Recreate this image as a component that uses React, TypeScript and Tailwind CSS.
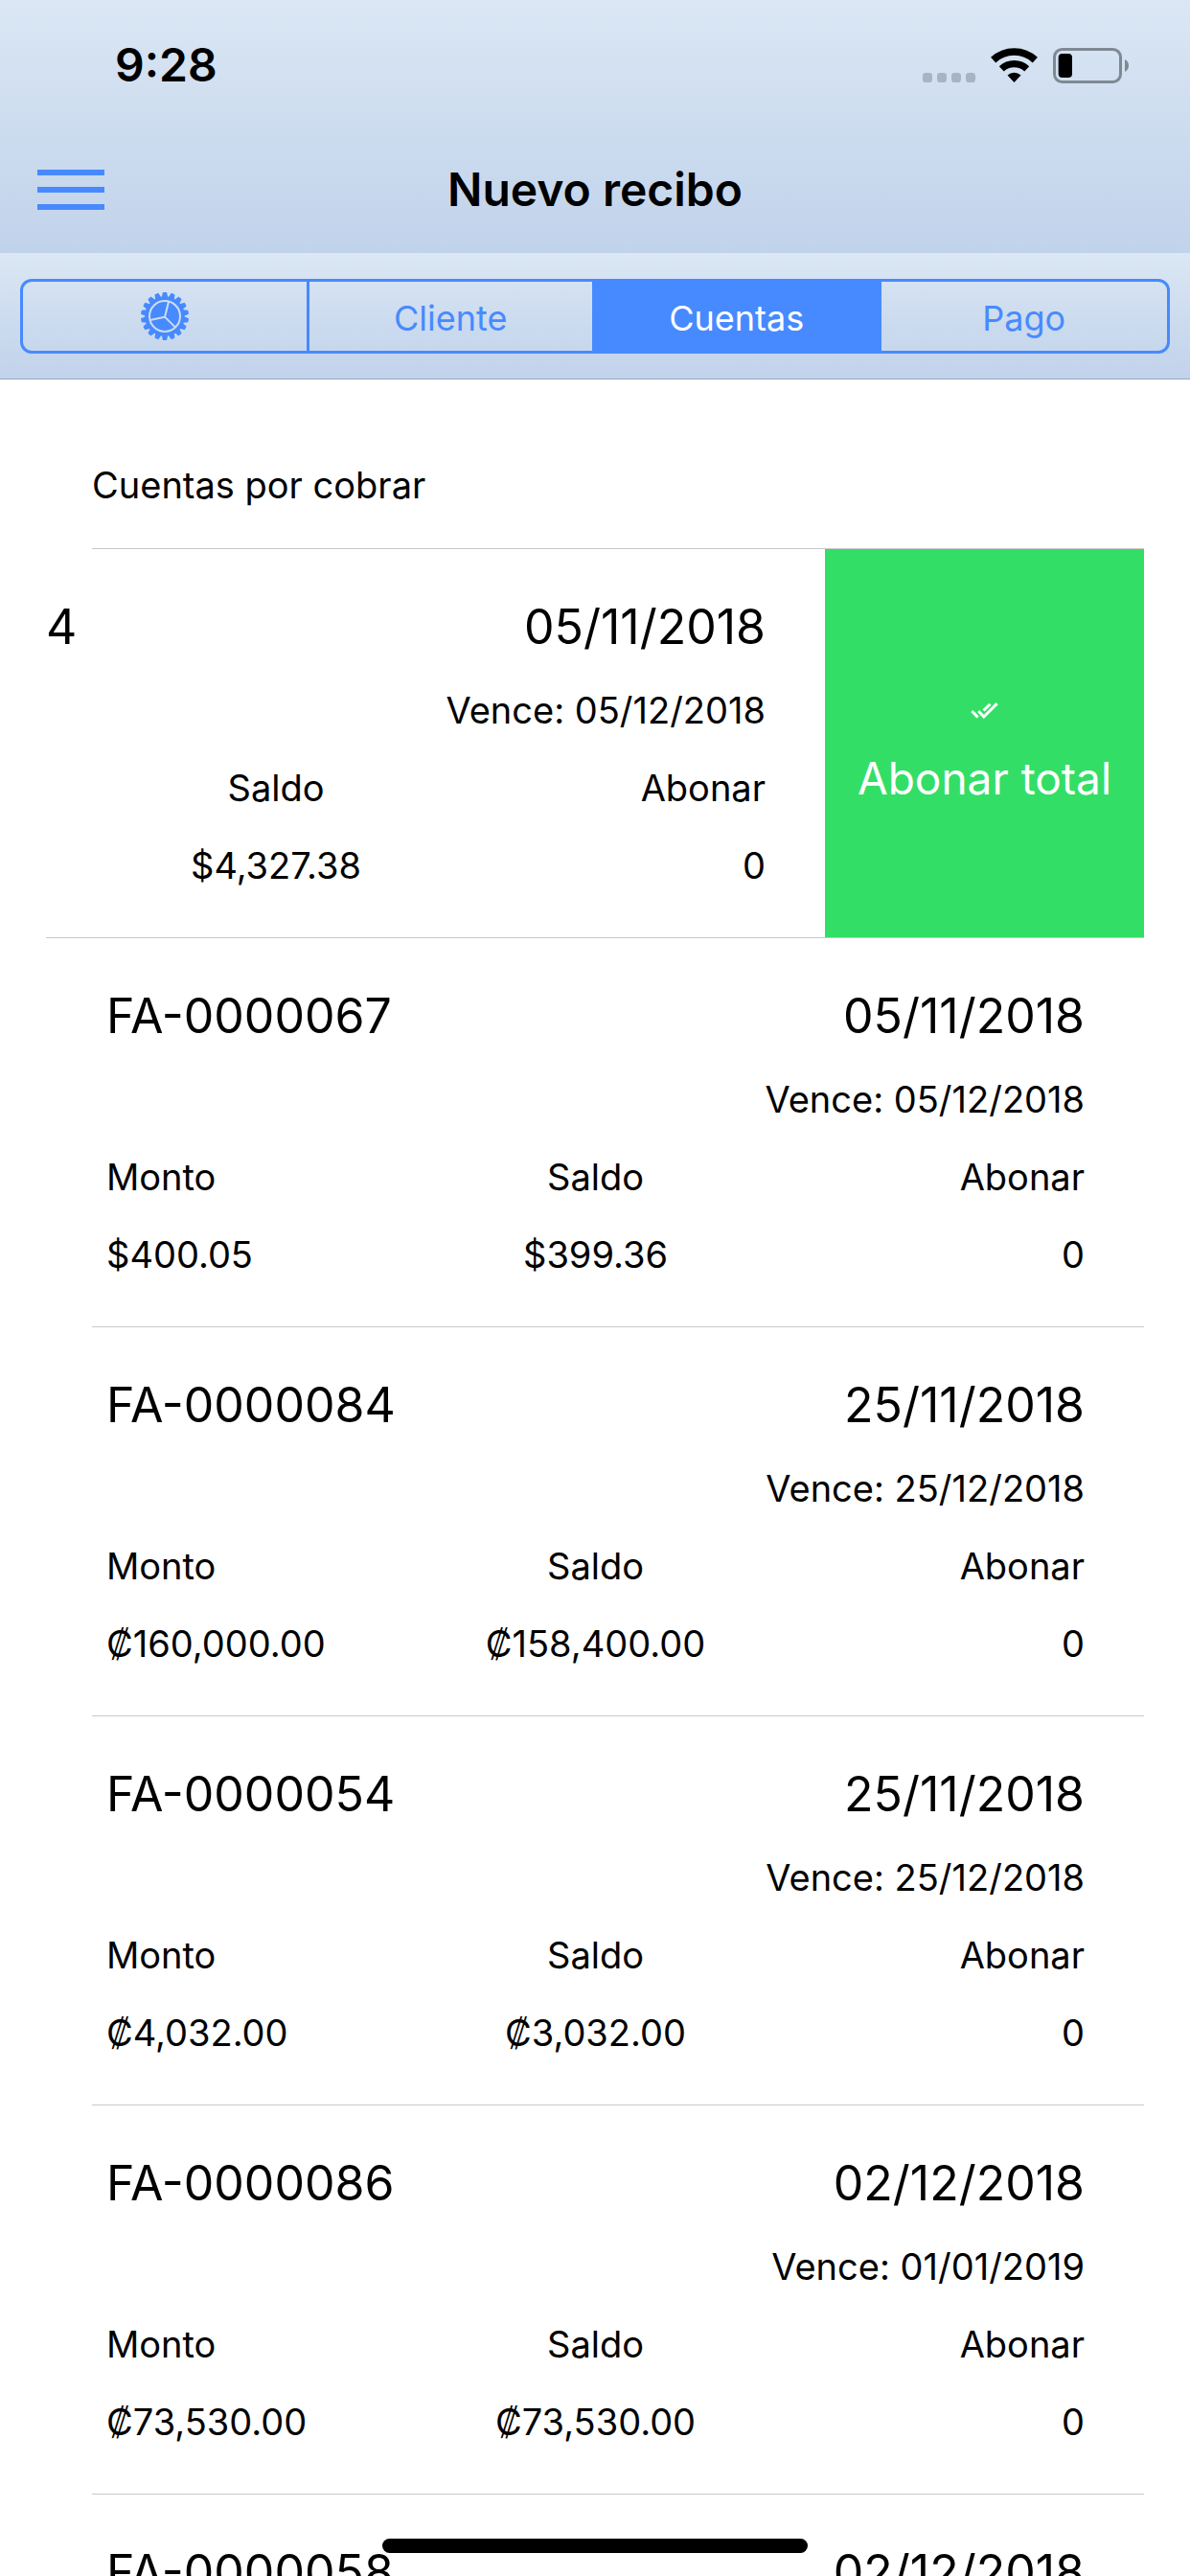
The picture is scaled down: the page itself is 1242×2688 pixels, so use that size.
type Invoice = {
  number: string
  date: string
  due?: string
  amount?: string
  balance?: string
  payment?: string
}

const invoices: Invoice[] = [
  { number: "FA-0000067", date: "05/11/2018", due: "05/12/2018", amount: "$400.05", balance: "$399.36", payment: "0" },
  { number: "FA-0000084", date: "25/11/2018", due: "25/12/2018", amount: "₡160,000.00", balance: "₡158,400.00", payment: "0" },
  { number: "FA-0000054", date: "25/11/2018", due: "25/12/2018", amount: "₡4,032.00", balance: "₡3,032.00", payment: "0" },
  { number: "FA-0000086", date: "02/12/2018", due: "01/01/2019", amount: "₡73,530.00", balance: "₡73,530.00", payment: "0" },
  { number: "FA-0000058", date: "02/12/2018" },
]

const gearTeeth = Array.from({ length: 18 }, (_, i) => i * 20)

function GearIcon() {
  return (
    <svg viewBox="-75 -75 150 150" className="size-[50px]" fill="currentColor" aria-hidden="true">
      <mask id="gear-cut" maskUnits="userSpaceOnUse" x="-75" y="-75" width="150" height="150">
        <rect x="-75" y="-75" width="150" height="150" fill="#fff" />
        <g fill="none" stroke="#000" strokeWidth="6">
          <circle r="48" />
          <path d="M0 2L12 -46M0 2L-46 12M0 2L33 35" />
        </g>
      </mask>
      <g mask="url(#gear-cut)">
        <circle r="62" />
        {gearTeeth.map((angle) => (
          <path key={angle} d="M-10 -59L-6 -75H6L10 -59Z" transform={`rotate(${angle})`} />
        ))}
      </g>
    </svg>
  )
}

function StatusBar() {
  return (
    <div className="flex h-[132px] items-center justify-between pl-[120px] pr-16 pt-1">
      <span className="text-[48px] font-semibold leading-none">9:28</span>
      <div className="flex items-center gap-4">
        <svg viewBox="30 27 165 108" className="h-9 w-[55px]" fill="#a7b4c2" aria-hidden="true">
          <rect x="30" y="105" width="30" height="30" rx="10" />
          <rect x="75" y="105" width="30" height="30" rx="10" />
          <rect x="120" y="105" width="30" height="30" rx="10" />
          <rect x="165" y="105" width="30" height="30" rx="10" />
        </svg>
        <svg viewBox="246 27 147 108" className="h-9 w-[49px]" fill="none" stroke="#000" aria-label="Wi-Fi">
          <path d="M254 64.8A96 96 0 0 1 385 64.8" strokeWidth="23" />
          <path d="M279.9 92.6A58 58 0 0 1 359.1 92.6" strokeWidth="22" />
          <path d="M319.5 135L298.5 112.3A31 31 0 0 1 340.5 112.3Z" fill="#000" stroke="none" />
        </svg>
        <svg viewBox="444 27 237 111" className="h-[37px] w-[79px]" aria-label="Batería">
          <rect x="448.5" y="31.5" width="207" height="102" rx="24" fill="none" stroke="#7f8993" strokeWidth="9" />
          <rect x="461" y="45" width="43" height="75" rx="12" />
          <path d="M669 63Q681 70 681 82.5T669 102Z" fill="#7f8993" />
        </svg>
      </div>
    </div>
  )
}

function NavBar() {
  return (
    <div className="grid h-[132px] grid-cols-[1fr_auto_1fr] items-center px-[39px]">
      <button type="button" aria-label="Menú" className="flex w-[70px] flex-col gap-3">
        <span className="h-[6px] bg-[#478aff]" />
        <span className="h-[6px] bg-[#478aff]" />
        <span className="h-[6px] bg-[#478aff]" />
      </button>
      <h1 className="text-[48px] font-semibold leading-none">Nuevo recibo</h1>
    </div>
  )
}

function Tabs() {
  return (
    <nav className="border-b border-[#9aa7bb] bg-linear-to-b from-[#dbe7f4] via-[#cddcef] to-[#c1d3eb] px-[21px] pb-[26px] pt-[27px]">
      <div className="grid h-[78px] grid-cols-4 divide-x-3 divide-[#478aff] overflow-hidden rounded-xl border-3 border-[#478aff] text-[36px] leading-none text-[#478aff]">
        <button type="button" aria-label="Ajustes" className="flex items-center justify-center">
          <GearIcon />
        </button>
        <button type="button" className="pt-1">Cliente</button>
        <button type="button" className="bg-[#478aff] pt-1 text-white">Cuentas</button>
        <button type="button" className="pt-1">Pago</button>
      </div>
    </nav>
  )
}

function InvoiceRow({ invoice }: { invoice: Invoice }) {
  return (
    <li className="ml-12 h-[406px] border-b border-[#c8c7cc] pl-[15px] pr-[62px] pt-[34px]">
      <div className="flex justify-between text-[50px] leading-[94px]">
        <h3>{invoice.number}</h3>
        <span>{invoice.date}</span>
      </div>
      {invoice.due && (
        <>
          <p className="text-right leading-[81px]">Vence: {invoice.due}</p>
          <dl className="grid grid-cols-3 leading-[81px]">
            <div>
              <dt>Monto</dt>
              <dd>{invoice.amount}</dd>
            </div>
            <div className="text-center">
              <dt>Saldo</dt>
              <dd>{invoice.balance}</dd>
            </div>
            <div className="text-right">
              <dt>Abonar</dt>
              <dd>{invoice.payment}</dd>
            </div>
          </dl>
        </>
      )}
    </li>
  )
}

// Row dragged to the left, with its action uncovered
function SwipedRow() {
  return (
    <li className="flex h-[406px] border-b border-[#c8c7cc]">
      <div className="flex-1 pr-[62px] pt-[34px]">
        <div className="flex justify-between text-[50px] leading-[94px]">
          <h3>4</h3>
          <span>05/11/2018</span>
        </div>
        <p className="text-right leading-[81px]">Vence: 05/12/2018</p>
        <dl className="grid grid-cols-[480px_1fr] leading-[81px]">
          <div className="text-center">
            <dt>Saldo</dt>
            <dd>$4,327.38</dd>
          </div>
          <div className="text-right">
            <dt>Abonar</dt>
            <dd>0</dd>
          </div>
        </dl>
      </div>
      <button type="button" className="flex w-[333px] flex-col items-center justify-center gap-8 bg-[#33de66] pt-6 text-[46px] leading-[60px] text-white">
        <svg viewBox="65 37 88 51" className="h-[17px] w-[29px]" fill="none" stroke="currentColor" strokeWidth="9" aria-hidden="true">
          <path d="M69 64L88 84M90 64L107 82L149 40M106 62L127 42" />
        </svg>
        Abonar total
      </button>
    </li>
  )
}

export default function App() {
  return (
    <div className="relative flex h-screen flex-col overflow-hidden bg-white font-[Inter,sans-serif] text-[38px] text-black">
      <header>
        <div className="bg-linear-to-b from-[#dbe7f4] via-[#cddcef] to-[#c1d3eb]">
          <StatusBar />
          <NavBar />
        </div>
        <Tabs />
      </header>
      <main className="min-h-0 flex-1 overflow-y-auto px-12 [scrollbar-width:none]">
        <h2 className="ml-12 border-b border-[#c8c7cc] pb-9 pt-20 leading-[60px]">Cuentas por cobrar</h2>
        <ul>
          <SwipedRow />
          {invoices.map((invoice) => (
            <InvoiceRow key={invoice.number} invoice={invoice} />
          ))}
        </ul>
      </main>
      <div className="absolute bottom-6 left-1/2 h-[15px] w-[444px] -translate-x-1/2 rounded-full bg-black" />
    </div>
  )
}
